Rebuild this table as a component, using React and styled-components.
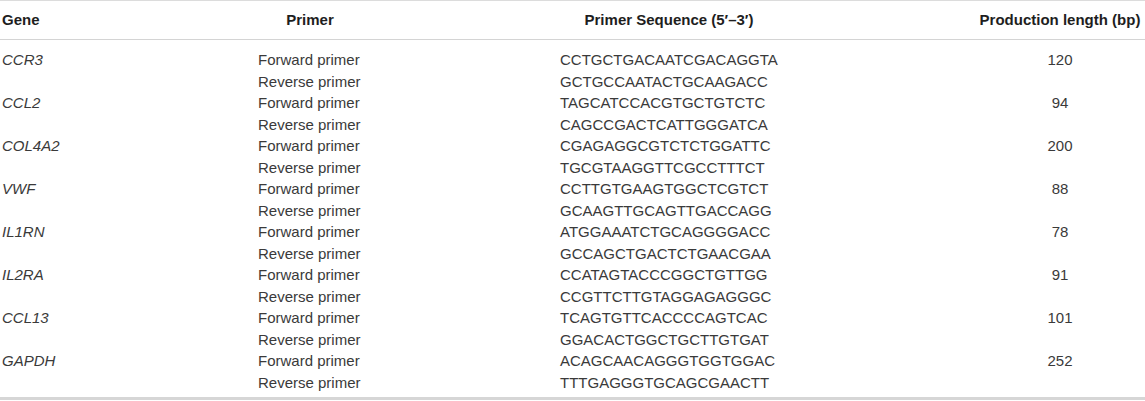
import React from "react";
import styled, { createGlobalStyle } from "styled-components";

const Global = createGlobalStyle`
  html, body { margin: 0; padding: 0; background: #fff; }
  body { font-family: "Liberation Sans", Arial, Helvetica, sans-serif; }
`;

const Table = styled.div`
  width: 1145px;
  border-top: 1px solid #dcdcdc;
  border-bottom: 3px solid #d6d6d6;
  box-sizing: border-box;
`;

const Row = styled.div`
  display: grid;
  grid-template-columns: 256px 302px 415px 170px;
  padding-left: 2px;
  height: ${(p) => p.$h};
  align-items: center;
`;

const HeadRow = styled(Row)`
  border-bottom: 1px solid #d4d4d4;
  font-weight: bold;
  font-size: 15px;
  color: #1e1e1e;
`;

const Body = styled.div`
  padding: 9px 0 4px;
  font-size: 15px;
  color: #3a3a3a;
`;

const Cell = styled.div`
  width: ${(p) => p.$w || "auto"};
  text-align: ${(p) => p.$align || "left"};
  font-style: ${(p) => (p.$italic ? "italic" : "normal")};
  white-space: nowrap;
  line-height: 21.5px;
`;

const rows = [
  ["CCR3", "CCTGCTGACAATCGACAGGTA", "GCTGCCAATACTGCAAGACC", "120"],
  ["CCL2", "TAGCATCCACGTGCTGTCTC", "CAGCCGACTCATTGGGATCA", "94"],
  ["COL4A2", "CGAGAGGCGTCTCTGGATTC", "TGCGTAAGGTTCGCCTTTCT", "200"],
  ["VWF", "CCTTGTGAAGTGGCTCGTCT", "GCAAGTTGCAGTTGACCAGG", "88"],
  ["IL1RN", "ATGGAAATCTGCAGGGGACC", "GCCAGCTGACTCTGAACGAA", "78"],
  ["IL2RA", "CCATAGTACCCGGCTGTTGG", "CCGTTCTTGTAGGAGAGGGC", "91"],
  ["CCL13", "TCAGTGTTCACCCCAGTCAC", "GGACACTGGCTGCTTGTGAT", "101"],
  ["GAPDH", "ACAGCAACAGGGTGGTGGAC", "TTTGAGGGTGCAGCGAACTT", "252"],
];

export default function App() {
  return (
    <>
      <Global />
      <Table>
        <HeadRow $h="38px">
          <Cell>Gene</Cell>
          <Cell $w="104px" $align="center">Primer</Cell>
          <Cell $w="218px" $align="center">Primer Sequence (5′–3′)</Cell>
          <Cell $align="center">Production length (bp)</Cell>
        </HeadRow>
        <Body>
          {rows.map(([gene, fwd, rev, len]) => (
            <React.Fragment key={gene}>
              <Row $h="21.5px">
                <Cell $italic>{gene}</Cell>
                <Cell $w="104px">Forward primer</Cell>
                <Cell $w="218px">{fwd}</Cell>
                <Cell $align="center">{len}</Cell>
              </Row>
              <Row $h="21.5px">
                <Cell />
                <Cell $w="104px">Reverse primer</Cell>
                <Cell $w="218px">{rev}</Cell>
                <Cell />
              </Row>
            </React.Fragment>
          ))}
        </Body>
      </Table>
    </>
  );
}
